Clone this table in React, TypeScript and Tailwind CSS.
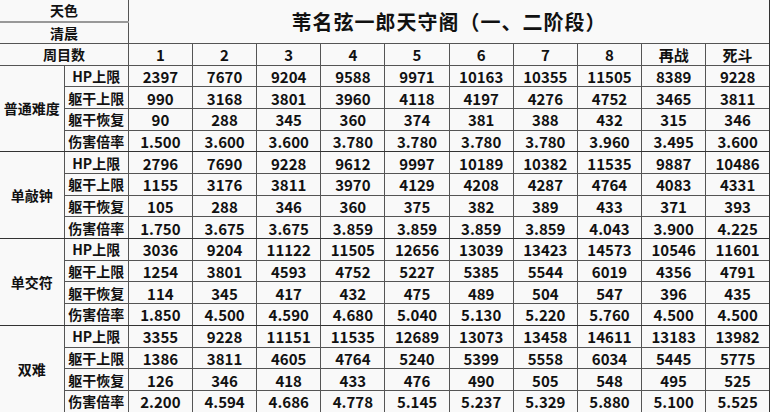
const cols = ['1', '2', '3', '4', '5', '6', '7', '8', '再战', '死斗'];

const groups: { name: string; rows: { label: string; values: string[] }[] }[] = [
  {
    name: '普通难度',
    rows: [
      { label: 'HP上限', values: ['2397', '7670', '9204', '9588', '9971', '10163', '10355', '11505', '8389', '9228'] },
      { label: '躯干上限', values: ['990', '3168', '3801', '3960', '4118', '4197', '4276', '4752', '3465', '3811'] },
      { label: '躯干恢复', values: ['90', '288', '345', '360', '374', '381', '388', '432', '315', '346'] },
      { label: '伤害倍率', values: ['1.500', '3.600', '3.600', '3.780', '3.780', '3.780', '3.780', '3.960', '3.495', '3.600'] },
    ],
  },
  {
    name: '单敲钟',
    rows: [
      { label: 'HP上限', values: ['2796', '7690', '9228', '9612', '9997', '10189', '10382', '11535', '9887', '10486'] },
      { label: '躯干上限', values: ['1155', '3176', '3811', '3970', '4129', '4208', '4287', '4764', '4083', '4331'] },
      { label: '躯干恢复', values: ['105', '288', '346', '360', '375', '382', '389', '433', '371', '393'] },
      { label: '伤害倍率', values: ['1.750', '3.675', '3.675', '3.859', '3.859', '3.859', '3.859', '4.043', '3.900', '4.225'] },
    ],
  },
  {
    name: '单交符',
    rows: [
      { label: 'HP上限', values: ['3036', '9204', '11122', '11505', '12656', '13039', '13423', '14573', '10546', '11601'] },
      { label: '躯干上限', values: ['1254', '3801', '4593', '4752', '5227', '5385', '5544', '6019', '4356', '4791'] },
      { label: '躯干恢复', values: ['114', '345', '417', '432', '475', '489', '504', '547', '396', '435'] },
      { label: '伤害倍率', values: ['1.850', '4.500', '4.590', '4.680', '5.040', '5.130', '5.220', '5.760', '4.500', '4.500'] },
    ],
  },
  {
    name: '双难',
    rows: [
      { label: 'HP上限', values: ['3355', '9228', '11151', '11535', '12689', '13073', '13458', '14611', '13183', '13982'] },
      { label: '躯干上限', values: ['1386', '3811', '4605', '4764', '5240', '5399', '5558', '6034', '5445', '5775'] },
      { label: '躯干恢复', values: ['126', '346', '418', '433', '476', '490', '505', '548', '495', '525'] },
      { label: '伤害倍率', values: ['2.200', '4.594', '4.686', '4.778', '5.145', '5.237', '5.329', '5.880', '5.100', '5.525'] },
    ],
  },
];

const cell = 'border border-[#555] text-center align-middle p-0 pt-[1px] leading-[19px]';

export default function App() {
  return (
    <div
      className="w-[770px] h-[412px] overflow-hidden bg-[#f9f9f9] text-[#111] font-bold"
      style={{ fontFamily: '"Noto Sans CJK SC", "Noto Sans", sans-serif' }}
    >
      <table className="w-[770px] table-fixed border-collapse text-[14px]">
        <colgroup>
          {Array.from({ length: 12 }).map((_, i) => (
            <col key={i} className="w-[64.17px]" />
          ))}
        </colgroup>
        <tbody>
          <tr className="h-[21.7px]">
            <td colSpan={2} className={`${cell} border-t-0 border-l-0 border-b-2 border-b-[#999]`}>天色</td>
            <td colSpan={10} rowSpan={2} className={`${cell} border-t-0 border-r-2 border-r-[#333] text-[20px] tracking-[1px] leading-[24px]`}>
              苇名弦一郎天守阁（一、二阶段）
            </td>
          </tr>
          <tr className="h-[21.7px]">
            <td colSpan={2} className={`${cell} border-l-0`}>清晨</td>
          </tr>
          <tr className="h-[21.7px]">
            <td colSpan={2} className={`${cell} border-l-0`}>周目数</td>
            {cols.map(c => (
              <td key={c} className={`${cell} text-[15px] last:border-r-2 last:border-r-[#333]`}>{c}</td>
            ))}
          </tr>
          {groups.map(g =>
            g.rows.map((r, i) => (
              <tr key={g.name + r.label} className="h-[21.7px]">
                {i === 0 && (
                  <td rowSpan={4} className={`${cell} border-l-0 border-b-[#333]`}>{g.name}</td>
                )}
                <td className={`${cell} ${i === 3 ? 'border-b-[#333]' : ''}`}>{r.label}</td>
                {r.values.map((v, j) => (
                  <td
                    key={j}
                    className={`${cell} text-[15px] ${i === 3 ? 'border-b-[#333]' : ''} ${j === 9 ? 'border-r-2 border-r-[#333]' : ''}`}
                  >
                    {v}
                  </td>
                ))}
              </tr>
            ))
          )}
        </tbody>
      </table>
    </div>
  );
}
